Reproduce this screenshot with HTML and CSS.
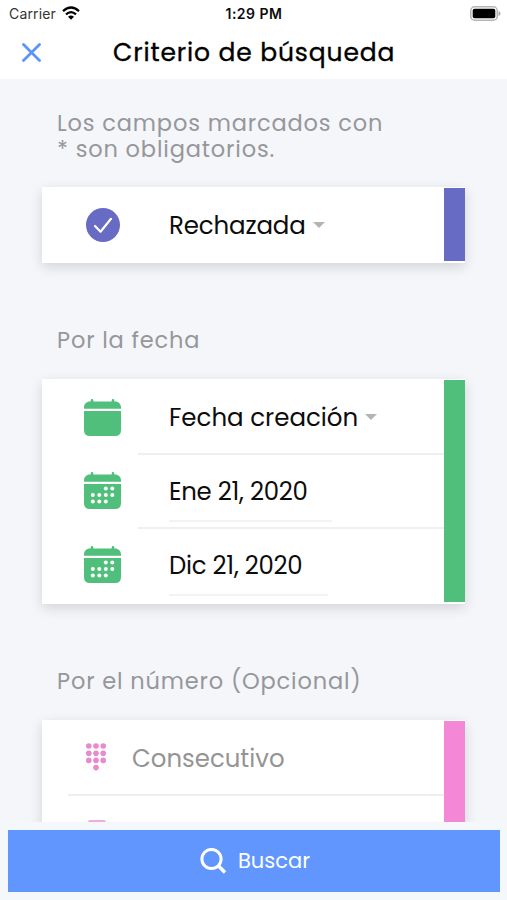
FILE: index.html
```html
<!DOCTYPE html>
<html lang="es">
<head>
<meta charset="utf-8">
<title>Criterio de búsqueda</title>
<link rel="stylesheet" href="styles.css">
</head>
<body>
<svg class="defs" aria-hidden="true">
  <symbol id="calendar" viewBox="0 0 37 37">
    <path d="M0 9.800V8.500C0 5 2.500 2.500 6 2.500H6.700V1.300Q6.700 0 8 0T9.300 1.300V2.500H27.700V1.300Q27.700 0 29 0T30.300 1.300V2.500H31C34.500 2.500 37 5 37 8.500V9.800ZM0 12H37V31Q37 37 31 37H6Q0 37 0 31Z"/>
  </symbol>
  <symbol id="calendar-dots" viewBox="0 0 37 37">
    <use href="#calendar"/>
    <g fill="#fff"><circle cx="21.800" cy="16.500" r="2"/><circle cx="28.300" cy="16.500" r="2"/><circle cx="8.800" cy="23" r="2"/><circle cx="15.300" cy="23" r="2"/><circle cx="21.800" cy="23" r="2"/><circle cx="28.300" cy="23" r="2"/><circle cx="8.800" cy="29.500" r="2"/><circle cx="15.300" cy="29.500" r="2"/><circle cx="21.800" cy="29.500" r="2"/></g>
  </symbol>
</svg>
<div class="screen">
  <div class="status">
    <div class="carrier"><span>Carrier</span>
      <svg width="18" height="14" viewBox="0 0 18 14"><g fill="none" stroke="#000" stroke-width="2.300"><path d="M1 5.200Q9-2.200 17 5.200"/><path d="M4 8.400Q9 3.800 14 8.400"/></g><path d="M6 10.700Q9 8.200 12 10.700L9 13.700Z"/></svg>
    </div>
    <div class="clock">1:29 PM</div>
    <svg class="battery" width="31" height="15" viewBox="0 0 31 15"><rect x=".8" y=".8" width="26.400" height="13.400" rx="3.800" fill="#fff" stroke="#b5b5b5" stroke-width="1.500"/><rect x="2.700" y="2.800" width="22.600" height="9.400" rx="1.800"/><path d="M28.500 5Q30.500 5.500 30.500 7.500T28.500 10Z" fill="#aaa"/></svg>
  </div>
  <header class="header">
    <svg class="close" width="19" height="19" viewBox="0 0 19 19"><path d="M1.500 1.500 17.500 17.500M17.500 1.500 1.500 17.500" fill="none" stroke="#5b95fa" stroke-width="2.800" stroke-linecap="round"/></svg>
    <h1 class="title">Criterio de búsqueda</h1>
  </header>
  <main class="content">
    <h2 class="label intro">Los campos marcados con<br>* son obligatorios.</h2>
    <section class="card state">
      <div class="rows">
        <div class="row">
          <svg class="icon check" viewBox="0 0 34 34"><circle cx="17" cy="17" r="17" fill="#676bc4"/><path d="M9 18 14.500 23.700 25 10.800" fill="none" stroke="#fff" stroke-width="2.200" stroke-linecap="round" stroke-linejoin="round"/></svg>
          <div class="value rejected"><span>Rechazada</span><i class="caret"></i></div>
        </div>
      </div>
      <div class="accent violet"></div>
    </section>
    <h2 class="label section-label">Por la fecha</h2>
    <section class="card dates">
      <div class="rows">
        <div class="row"><svg class="icon"><use href="#calendar"/></svg><div class="value created"><span>Fecha creación</span><i class="caret"></i></div></div>
        <div class="row"><svg class="icon raised"><use href="#calendar-dots"/></svg><div class="value"><span class="day">Ene 21, 2020</span></div></div>
        <div class="row"><svg class="icon raised"><use href="#calendar-dots"/></svg><div class="value"><span class="day to">Dic 21, 2020</span></div></div>
      </div>
      <div class="accent green"></div>
    </section>
    <h2 class="label section-label">Por el número (Opcional)</h2>
    <section class="card numbers">
      <div class="rows">
        <div class="number-row">
          <svg width="20" height="28" viewBox="0 0 20 28" fill="#e989cf"><circle cx="2.800" cy="3" r="2.800"/><circle cx="10" cy="3" r="2.800"/><circle cx="17.200" cy="3" r="2.800"/><circle cx="2.800" cy="10.200" r="2.800"/><circle cx="10" cy="10.200" r="2.800"/><circle cx="17.200" cy="10.200" r="2.800"/><circle cx="2.800" cy="17.400" r="2.800"/><circle cx="10" cy="17.400" r="2.800"/><circle cx="17.200" cy="17.400" r="2.800"/><circle cx="10" cy="24.600" r="2.800"/></svg>
          <span>Consecutivo</span>
        </div>
        <div class="next-row"><i class="next-icon"></i></div>
      </div>
      <div class="accent pink"></div>
    </section>
  </main>
  <footer class="footer">
    <button class="search"><svg width="27" height="27" viewBox="0 0 27 27" fill="none" stroke="#fff"><circle cx="11.500" cy="11" r="9.600" stroke-width="3"/><path d="M18.300 17.800 25 24.500" stroke-width="3.500"/></svg><span>Buscar</span></button>
  </footer>
</div>
</body>
</html>
```
FILE: styles.css
```css
* { box-sizing: border-box; }
body { margin: 0; font-family: Poppins, Inter, "Liberation Sans", sans-serif; color: #0c0c0c; }
.defs { display: none; }
.screen { width: 507px; height: 900px; display: flex; flex-direction: column; overflow: hidden; background: #f4f6fa; }
.status { height: 28px; flex: none; display: grid; grid-template-columns: 1fr auto 1fr; align-items: center; padding: 0 6px 0 9px; background: #fff; font: 14px/28px Inter, sans-serif; }
.carrier { display: flex; align-items: center; gap: 6px; color: #333; letter-spacing: .15px; }
.carrier svg { margin-top: -3px; }
.clock { font-weight: 600; font-size: 14px; letter-spacing: .5px; margin-right: 2px; }
.battery { justify-self: end; margin-top: -2px; }
.header { height: 51px; flex: none; display: flex; align-items: center; padding: 0 22px 3px; background: #fff; }
.close { flex: none; margin-top: 1px; }
.title { margin: 2px 0 0 72px; font-size: 25px; line-height: 34px; font-weight: 400; letter-spacing: .88px; white-space: nowrap; color: #000; -webkit-text-stroke: .35px #000; }
.content { height: 743px; flex: none; overflow: hidden; padding: 31px 42px 0; }
.label { margin: 0 0 0 15px; font-size: 22.5px; line-height: 25.5px; font-weight: 400; color: #96979b; letter-spacing: .85px; white-space: nowrap; }
.intro { height: 77px; padding-top: 1px; }
.section-label { height: 116px; padding-top: 65px; }
.card { width: 423px; display: flex; background: #fff; box-shadow: 0 4px 12px rgba(0,0,0,.14); }
.rows { flex: 1; display: flex; flex-direction: column; }
.state { height: 76px; }
.dates { height: 225px; }
.numbers { height: 180px; }
.accent { width: 21px; margin: 1px 0 2px; flex: none; }
.violet { background: #676bc4; }
.green { background: #50bf7c; }
.pink { background: #f488d6; }
.row { flex: 1; display: flex; align-items: center; padding-left: 42px; }
.dates .row { flex: none; height: 74px; }
.dates .row:first-child { height: 76px; }
.icon { width: 37px; height: 37px; flex: none; fill: #50bf7c; }
.raised { margin-bottom: 3px; }
.check { width: 34px; height: 34px; margin: -1px 1.5px 0; }
.value { height: 100%; flex: 1; display: flex; align-items: center; margin-left: 17px; padding-left: 31px; font-size: 24.5px; white-space: nowrap; }
.rejected { letter-spacing: -.15px; }
.created { padding-top: 2px; }
.dates .row:not(:last-child) .value { border-bottom: 2px solid #eeeff0; }
.caret { margin-left: 7px; border: 6px solid transparent; border-top-color: #b4b4b4; border-bottom: 0; }
.day { align-self: flex-start; width: 163px; height: 67px; line-height: 74px; font-size: 24.4px; letter-spacing: -.25px; border-bottom: 2px solid #f3f3f4; }
.to { width: 159px; }
.number-row { height: 76px; margin-left: 26px; padding-left: 18px; display: flex; align-items: center; gap: 26px; border-bottom: 2px solid #eeeff0; font-size: 24.4px; color: #949494; }
.number-row span { padding-top: 2px; }
.next-row { padding: 24px 0 0 46px; }
.next-icon { display: block; width: 18px; height: 20px; border-radius: 2px; background: #f1aedc; }
.footer { flex: 1; padding: 8px 7px 9px 8px; background: #f4f8fa; }
.search { width: 100%; height: 62px; border: 0; padding: 0 0 0 2px; display: flex; align-items: center; justify-content: center; gap: 11px; background: #6096fe; color: #fff; font: inherit; font-size: 21px; }
.search span { margin-top: -2px; }
```
